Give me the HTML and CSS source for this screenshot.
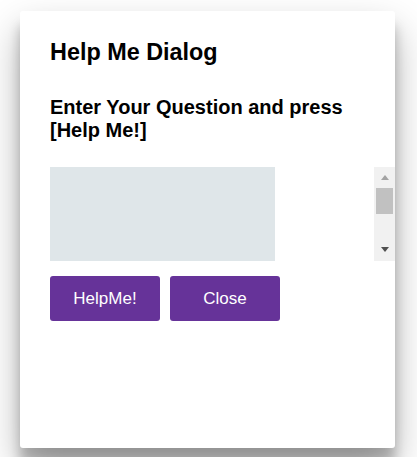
FILE: index.html
```html
<!DOCTYPE html>
<html>
<head>
<meta charset="utf-8">
<link rel="stylesheet" href="styles.css">
</head>
<body>
<div class="dialog">
  <h2 class="title">Help Me Dialog</h2>
  <h3 class="prompt">Enter Your Question and press [Help Me!]</h3>
  <div class="input-row">
    <textarea class="question"></textarea>
    <div class="scrollbar">
      <span class="arrow-up"></span>
      <span class="thumb"></span>
      <span class="arrow-down"></span>
    </div>
  </div>
  <div class="actions">
    <button class="btn">HelpMe!</button>
    <button class="btn">Close</button>
  </div>
</div>
</body>
</html>
```
FILE: styles.css
```css
html, body {
  margin: 0;
  padding: 0;
  background: #ffffff;
}
body {
  font-family: "Liberation Sans", Arial, sans-serif;
  color: #000;
  padding: 11px 0 0 20px;
  height: 457px;
  box-sizing: border-box;
  overflow: hidden;
}
.dialog {
  width: 375px;
  height: 437px;
  box-sizing: border-box;
  background: #fff;
  border-radius: 3px;
  padding: 28px 0 0 30px;
  box-shadow: 0 19px 38px rgba(0,0,0,0.30), 0 15px 12px rgba(0,0,0,0.22);
}
.title {
  margin: 0;
  font-size: 23.4px;
  font-weight: 700;
  line-height: 26px;
}
.prompt {
  margin: 31px 0 0;
  width: 310px;
  font-size: 20px;
  font-weight: 700;
  line-height: 23px;
}
.input-row {
  display: flex;
  margin-top: 25px;
  height: 94px;
}
.question {
  width: 225px;
  height: 94px;
  box-sizing: border-box;
  margin: 0;
  border: none;
  resize: none;
  background: #dfe6e9;
  outline: none;
}
.scrollbar {
  margin-left: auto;
  width: 21px;
  box-sizing: border-box;
  background: #f1f1f1;
  display: flex;
  flex-direction: column;
  align-items: center;
  padding: 8px 2px 9px;
}
.arrow-up {
  width: 0;
  height: 0;
  border-left: 4.5px solid transparent;
  border-right: 4.5px solid transparent;
  border-bottom: 5px solid #a3a3a3;
}
.thumb {
  margin-top: 8px;
  width: 17px;
  height: 26px;
  background: #c1c1c1;
}
.arrow-down {
  margin-top: auto;
  width: 0;
  height: 0;
  border-left: 4.5px solid transparent;
  border-right: 4.5px solid transparent;
  border-top: 5px solid #505050;
}
.actions {
  display: flex;
  gap: 10px;
  margin-top: 15px;
}
.btn {
  width: 110px;
  height: 45px;
  border: none;
  border-radius: 3px;
  background: #663399;
  color: #fff;
  font-family: "Liberation Sans", Arial, sans-serif;
  font-size: 17px;
  padding: 0;
}
```
